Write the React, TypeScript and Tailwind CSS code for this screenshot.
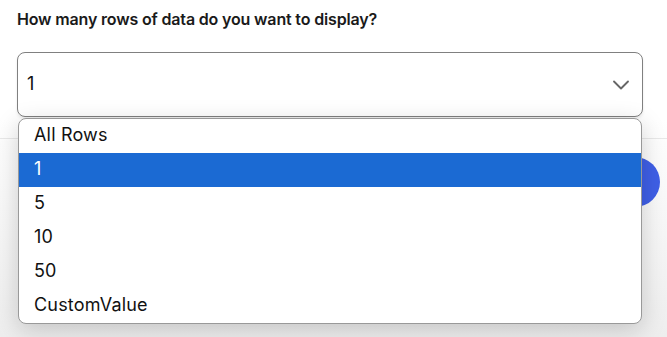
import { ChevronDown } from "lucide-react";

const options = ["All Rows", "1", "5", "10", "50", "CustomValue"];

const App = () => {
  const selected = "1";
  return (
    <div className="relative h-[337px] w-[667px] overflow-hidden bg-white font-['Inter',sans-serif] text-[#111]">
      {/* content behind the open menu */}
      <div className="absolute left-0 right-0 top-[118px] bottom-0 bg-gradient-to-b from-transparent to-[#eeeeee]" />
      <div className="absolute left-0 right-0 top-[138px] border-t border-[#e8e8e8]" />
      <div className="absolute left-[480px] top-[157px] h-[50px] w-[180px] rounded-full bg-[#3f5fe6]" />

      <div className="relative w-[643px] pl-[17px] pt-[7px]">
        <p className="text-[16px] font-semibold tracking-[-0.01em] text-[#1a1a1a]">
          How many rows of data do you want to display?
        </p>
        <div className="mt-[21px] flex h-[65px] items-center justify-between rounded-lg border border-[#808080] bg-white pb-[3px] pl-[9px] pr-[7px] shadow-[0_2px_3px_rgba(0,0,0,0.08)]">
          <span className="text-[18px] tracking-[0.01em]">{selected}</span>
          <ChevronDown className="mt-[3px] h-7 w-7 text-[#666]" strokeWidth={1.6} />
        </div>
        <ul className="mx-[1px] mt-[1px] overflow-hidden rounded-lg border border-[#999] bg-white shadow-[0_6px_24px_rgba(0,0,0,0.18)]">
          {options.map((o) => (
            <li
              key={o}
              className={
                o === selected
                  ? "flex h-[34px] items-center bg-[#1b6ad3] pb-[3px] pl-[15px] text-[18px] tracking-[0.01em] text-white"
                  : "flex h-[34px] items-center pb-[3px] pl-[15px] text-[18px] tracking-[0.01em] text-[#111]"
              }
            >
              {o}
            </li>
          ))}
        </ul>
      </div>
    </div>
  );
};

export default App;
